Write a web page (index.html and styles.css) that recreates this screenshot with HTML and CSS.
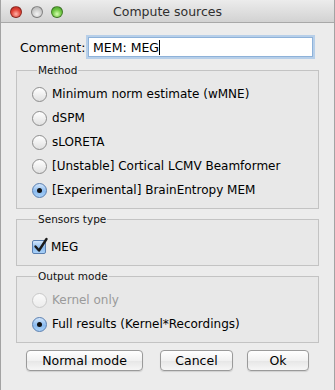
FILE: index.html
```html
<!DOCTYPE html>
<html>
<head>
<meta charset="utf-8">
<link rel="stylesheet" href="styles.css">
</head>
<body>
<div class="window">
  <div class="titlebar">
    <div class="lights">
      <span class="light red"></span>
      <span class="light gray"></span>
      <span class="light green"></span>
    </div>
    <div class="title">Compute sources</div>
    <div class="spacer"></div>
  </div>
  <div class="content">
    <div class="comment-row">
      <label class="comment-label">Comment:</label>
      <div class="input">MEM: MEG<span class="caret"></span></div>
    </div>

    <fieldset class="group method">
      <legend>Method</legend>
      <div class="opt"><span class="radio"></span><span>Minimum norm estimate (wMNE)</span></div>
      <div class="opt"><span class="radio"></span><span>dSPM</span></div>
      <div class="opt"><span class="radio"></span><span>sLORETA</span></div>
      <div class="opt"><span class="radio"></span><span>[Unstable] Cortical LCMV Beamformer</span></div>
      <div class="opt"><span class="radio on"></span><span>[Experimental] BrainEntropy MEM</span></div>
    </fieldset>

    <fieldset class="group sensors">
      <legend>Sensors type</legend>
      <div class="opt">
        <span class="check">
          <svg width="18" height="18" viewBox="0 0 18 18"><path d="M3.5 9.5 L7 13.5 L14.5 2" fill="none" stroke="#1b1b1b" stroke-width="2.4" stroke-linecap="round" stroke-linejoin="round"/></svg>
        </span>
        <span>MEG</span>
      </div>
    </fieldset>

    <fieldset class="group output">
      <legend>Output mode</legend>
      <div class="opt disabled"><span class="radio"></span><span>Kernel only</span></div>
      <div class="opt"><span class="radio on"></span><span>Full results (Kernel*Recordings)</span></div>
    </fieldset>

    <div class="buttons">
      <button class="btn normal">Normal mode</button>
      <button class="btn cancel">Cancel</button>
      <button class="btn ok">Ok</button>
    </div>
  </div>
</div>
</body>
</html>
```

FILE: styles.css
```css
* { box-sizing: border-box; }
html, body { margin: 0; padding: 0; background: #ececec; }
body { font-family: "DejaVu Sans", "Liberation Sans", sans-serif; font-size: 12px; color: #000; }

.window {
  width: 335px;
  height: 390px;
  border-left: 1px solid #a3a3a3;
  border-right: 1px solid #a3a3a3;
  background: #ececec;
  overflow: hidden;
}

.titlebar {
  height: 23px;
  display: grid;
  grid-template-columns: 80px 1fr 80px;
  align-items: center;
  background: linear-gradient(#ececec, #d2d2d2);
  border-bottom: 1px solid #a8a8a8;
}
.lights { display: flex; gap: 8.5px; padding-left: 9px; padding-top: 2px; align-items: center; }
.light {
  width: 12px; height: 12px; border-radius: 50%;
  border: 1px solid rgba(0,0,0,0.35);
}
.light.red { background: radial-gradient(circle at 50% 70%, #ffb3a8 0%, #e3473a 50%, #b0201a 100%); }
.light.gray { background: radial-gradient(circle at 50% 70%, #f4f4f4 0%, #cfcfcf 50%, #a9a9a9 100%); }
.light.green { background: radial-gradient(circle at 50% 70%, #d7ffb0 0%, #71c845 50%, #3e9424 100%); }
.title { text-align: center; font-size: 12.5px; color: #2f2f2f; padding-top: 1px; }

.content { padding: 0 15px 0 15px; }

.comment-row {
  display: flex; align-items: center;
  margin-top: 14px;
  padding-left: 4px;
  font-size: 12.5px;
}
.comment-label { width: 68px; }
.input {
  width: 225px; height: 20px;
  background: #fff;
  border: 1px solid #8eb2d9;
  box-shadow: 0 0 0 2px #b7cfe9;
  padding: 1px 4px;
  line-height: 17px;
}
.caret { display: inline-block; width: 1px; height: 15px; background: #000; vertical-align: -3px; }

.group {
  margin: 0;
  border: 1px solid #c3c3c3;
  padding: 0 0 0 15px;
  background: #e8e8e8;
}
.group legend {
  font-size: 10.5px;
  padding: 0 1px;
  margin-left: 5px;
  color: #111;
}
.method { margin-top: 7px; padding-top: 6px; padding-bottom: 6px; }
.sensors { margin-top: 4px; padding-top: 10px; padding-bottom: 6px; }
.output { margin-top: 4px; padding-top: 6px; padding-bottom: 6px; }

.opt { display: flex; align-items: center; height: 24px; gap: 5px; }
.opt.disabled { color: #9a9a9a; }

.radio {
  width: 15px; height: 15px; border-radius: 50%;
  border: 1px solid #8d8d8d;
  background: linear-gradient(#ffffff, #e0e0e0);
  display: flex; align-items: center; justify-content: center;
  flex: none;
}
.opt.disabled .radio { border-color: #c8c8c8; background: linear-gradient(#fafafa, #ececec); }
.radio.on {
  border-color: #5a7fb0;
  background: linear-gradient(#d3e6fb, #8bbbef 55%, #a8d0f7);
}
.radio.on::after {
  content: ""; width: 5px; height: 5px; border-radius: 50%; background: #111;
}

.check {
  width: 14px; height: 14px; border-radius: 2px;
  border: 1px solid #5a7fb0;
  background: linear-gradient(#d3e6fb, #8bbbef 55%, #a8d0f7);
  position: relative; flex: none;
}
.check svg { position: absolute; left: -1px; top: -4px; }

.buttons {
  display: flex;
  margin-top: 7px;
  padding-left: 10px;
}
.btn {
  font-family: inherit; font-size: 12.5px; color: #000;
  height: 21px; padding: 0;
  border: 1px solid #9a9a9a;
  border-radius: 4px;
  background: linear-gradient(#ffffff, #f1f1f1 50%, #e6e6e6 51%, #f6f6f6);
  box-shadow: 0 1px 1px rgba(0,0,0,0.12);
}
.normal { width: 117px; }
.cancel { width: 73px; margin-left: 17px; }
.ok { width: 62px; margin-left: 14px; }
```
